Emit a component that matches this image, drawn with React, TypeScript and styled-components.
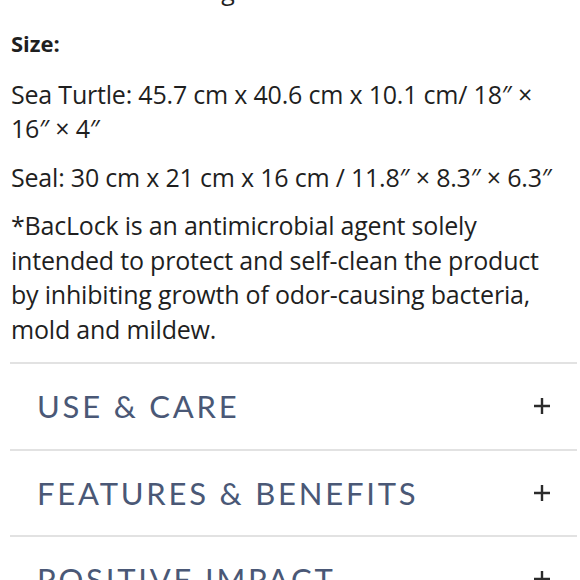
import React from 'react';
import styled, { createGlobalStyle } from 'styled-components';

const GlobalStyle = createGlobalStyle`
  html, body {
    margin: 0;
    padding: 0;
    background: #ffffff;
  }
  body {
    font-family: "Open Sans", "Noto Sans", sans-serif;
    color: #1f1f1f;
    overflow: hidden;
  }
`;

const Page = styled.div`
  width: 580px;
  height: 580px;
  overflow: hidden;
`;

const Details = styled.div`
  padding: 0 10px 0 11px;
  margin-top: -27px;
`;

const Para = styled.p`
  margin: 0 0 14px;
  font-size: 25px;
  line-height: 34.5px;
  letter-spacing: -0.2px;
`;

const Label = styled.p`
  margin: 18px 0 17px;
  font-size: 22px;
  line-height: 34px;
  font-weight: 700;
`;

const Accordion = styled.div`
  margin: 16px 3px 0 10px;
`;

const Row = styled.div`
  display: flex;
  align-items: center;
  justify-content: space-between;
  height: 84.5px;
  padding: 0 26px 0 27px;
  border-top: 2px solid #e2e2e2;
`;

const Title = styled.span`
  font-family: Lato, sans-serif;
  font-size: 31px;
  letter-spacing: 2.8px;
  color: #4a5876;
`;

const Plus = styled.svg`
  width: 18px;
  height: 18px;
  flex: none;
`;

const PlusIcon = () => (
  <Plus viewBox="0 0 18 18">
    <path d="M9 1v16M1 9h16" stroke="#2b2b2b" strokeWidth="2.4" />
  </Plus>
);

const sections = ['USE & CARE', 'FEATURES & BENEFITS', 'POSITIVE IMPACT'];

export default function App() {
  return (
    <Page>
      <GlobalStyle />
      <Details>
        <Para>Fill: 100% soft filling</Para>
        <Label>Size:</Label>
        <Para>Sea Turtle: 45.7 cm x 40.6 cm x 10.1 cm/ 18″ × 16″ × 4″</Para>
        <Para>Seal: 30 cm x 21 cm x 16 cm / 11.8″ × 8.3″ × 6.3″</Para>
        <Para>
          *BacLock is an antimicrobial agent solely intended to protect and self-clean the product by
          inhibiting growth of odor-causing bacteria, mold and mildew.
        </Para>
      </Details>
      <Accordion>
        {sections.map((s) => (
          <Row key={s}>
            <Title>{s}</Title>
            <PlusIcon />
          </Row>
        ))}
      </Accordion>
    </Page>
  );
}
